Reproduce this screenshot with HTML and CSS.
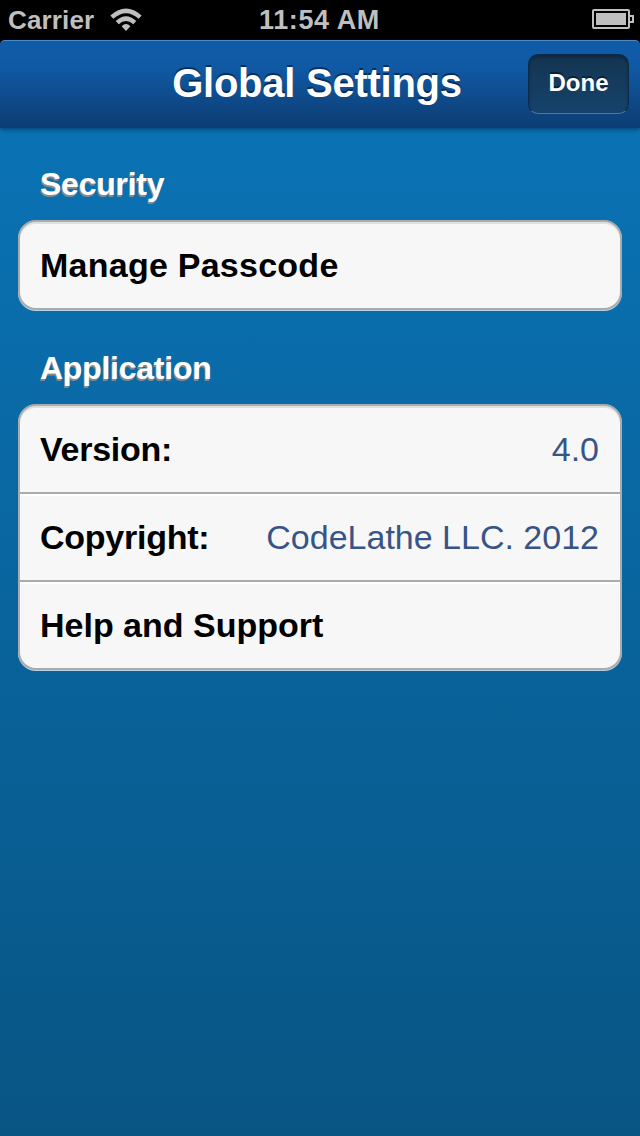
FILE: index.html
```html
<!DOCTYPE html>
<html lang="en">
<head>
  <meta charset="utf-8">
  <title>Global Settings</title>
  <link rel="stylesheet" href="styles.css">
</head>
<body>
  <div class="status-bar">
    <div class="status-left">
      <span class="carrier">Carrier</span>
      <svg class="wifi" width="32" height="24" viewBox="0 0 32 24">
        <path d="M1.8 9.2 Q16 -3.4 30.2 9.2" />
        <path d="M7.2 14.6 Q16 6.6 24.8 14.6" />
        <path class="wifi-dot" d="M16 23 L11.6 18.2 Q16 13.8 20.4 18.2 Z" />
      </svg>
    </div>
    <span class="time">11:54 AM</span>
    <svg class="battery" width="42" height="22" viewBox="0 0 42 22">
      <rect class="battery-line" x="1" y="1" width="36" height="18" rx="1" />
      <rect class="battery-fill" x="4" y="4" width="30" height="12" />
      <path class="battery-line" d="M38 7 H41 V13 H38" />
    </svg>
  </div>

  <header class="nav-bar">
    <h1>Global Settings</h1>
    <button type="button" class="done">Done</button>
  </header>

  <main class="settings">
    <h2>Security</h2>
    <ul class="group">
      <li class="row"><span class="label passcode">Manage Passcode</span></li>
    </ul>

    <h2>Application</h2>
    <ul class="group">
      <li class="row">
        <span class="label version">Version:</span>
        <span class="value">4.0</span>
      </li>
      <li class="row">
        <span class="label copyright">Copyright:</span>
        <span class="value">CodeLathe LLC. 2012</span>
      </li>
      <li class="row"><span class="label">Help and Support</span></li>
    </ul>
  </main>
</body>
</html>
```
FILE: styles.css
```css
body {
  margin: 0;
  height: 1136px;
  display: flex;
  flex-direction: column;
  overflow: hidden;
  background-color: #000;
  font-family: "Liberation Sans", Arial, sans-serif;
}

.status-bar {
  display: grid;
  grid-template-columns: 1fr auto 1fr;
  align-items: center;
  height: 40px;
  padding: 0 6px 0 8px;
  box-sizing: border-box;
  color: #bfbfbf;
  font-weight: bold;
  line-height: 40px;
}

.status-left {
  display: flex;
  align-items: center;
  gap: 16px;
}

.carrier {
  font-size: 26px;
  letter-spacing: 0.15px;
}

.wifi {
  fill: none;
  stroke: #bfbfbf;
  stroke-width: 4.4;
}

.wifi-dot {
  fill: #bfbfbf;
  stroke: none;
}

.time {
  margin-right: 3px;
  font-size: 27px;
  letter-spacing: 0.6px;
}

.battery {
  justify-self: end;
}

.battery-line {
  fill: none;
  stroke: #bfbfbf;
  stroke-width: 2;
}

.battery-fill {
  fill: #bfbfbf;
}

.nav-bar {
  display: grid;
  grid-template-columns: 106px 1fr 101px;
  align-items: center;
  height: 88px;
  flex-shrink: 0;
  padding: 0 11px 2px 0;
  box-sizing: border-box;
  border-top: 1px solid #4c8bc3;
  border-radius: 5px 5px 0 0;
  background: linear-gradient(#105ca9, #1059a4 30%, #0c3d72);
  box-shadow: 0 1px 5px rgba(0, 20, 50, 0.6);
  z-index: 1;
}

h1 {
  grid-column: 2;
  margin: 0 0 2px;
  color: #fff;
  font-size: 40px;
  letter-spacing: -0.25px;
  line-height: 46px;
  text-align: center;
  text-shadow: 0 -2px 0 rgba(0, 20, 50, 0.65);
  white-space: nowrap;
}

.done {
  width: 101px;
  height: 60px;
  padding: 0 0 2px;
  border: 1px solid #0d2b48;
  border-bottom-color: #54779d;
  border-radius: 10px;
  background: linear-gradient(#143450, #16436d);
  box-shadow: inset 0 2px 3px rgba(0, 15, 30, 0.35);
  color: #fff;
  font-family: inherit;
  font-size: 24px;
  font-weight: bold;
  text-shadow: 0 -2px 0 rgba(0, 15, 35, 0.6);
}

.settings {
  flex: 1;
  padding: 33px 18px 0;
  background: linear-gradient(#0a72b4, #085584);
}

h2 {
  margin: 0 0 13px;
  padding-left: 22px;
  color: #fff;
  font-size: 32px;
  letter-spacing: -0.25px;
  line-height: 46px;
  text-shadow: -1px 2px 0 #888;
}

.group {
  margin: 0 0 35px;
  padding: 0;
  list-style: none;
  border: 2px solid #aaabac;
  border-radius: 18px;
  background-color: #f7f7f7;
  box-shadow: inset 0 2px 0 #e0e0e0, 0 1px 0 rgba(255, 255, 255, 0.7);
}

.row {
  display: flex;
  justify-content: space-between;
  align-items: center;
  height: 86px;
  padding: 0 22px 0 20px;
  font-size: 34px;
}

.row + .row {
  border-top: 2px solid #aaabac;
  box-shadow: inset 0 2px 0 #fff;
}

.label {
  color: #000;
  font-weight: bold;
}

.passcode {
  letter-spacing: 0.25px;
}

.version,
.copyright {
  letter-spacing: -0.25px;
}

.value {
  margin-right: -1px;
  color: #385487;
}
```
